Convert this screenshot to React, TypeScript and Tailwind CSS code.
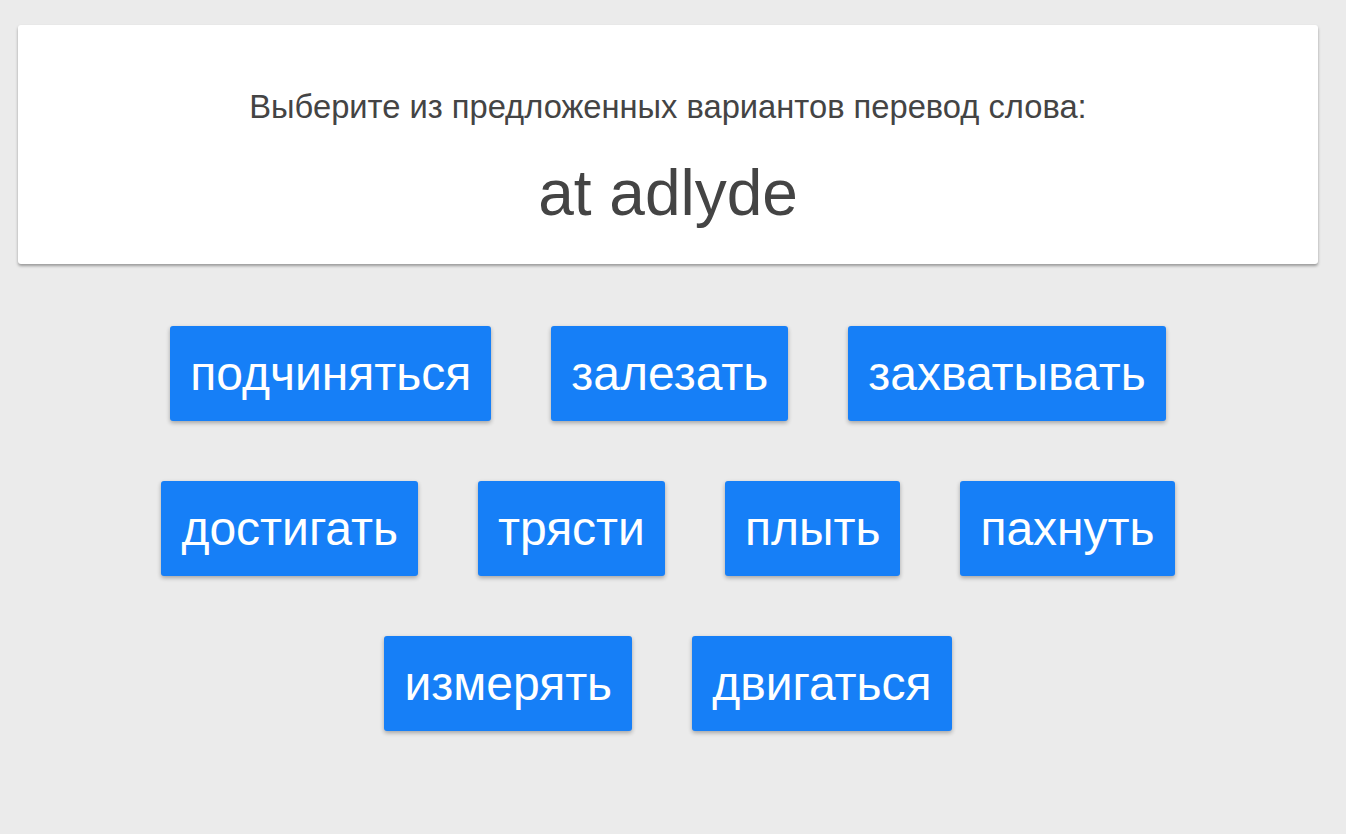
const words = [
  "подчиняться",
  "залезать",
  "захватывать",
  "достигать",
  "трясти",
  "плыть",
  "пахнуть",
  "измерять",
  "двигаться",
];

export default function App() {
  return (
    <div
      className="min-h-[834px] bg-[#ebebeb] pt-[25px]"
      style={{ fontFamily: '"Liberation Sans", Arial, sans-serif' }}
    >
      <div className="ml-[18px] w-[1300px]">
        <div className="flex h-[239px] flex-col items-center rounded-[3px] bg-white pt-[62px] shadow-[0_2px_3px_rgba(0,0,0,0.35)]">
          <p className="text-[32.7px] leading-[40px] text-[#444]">
            Выберите из предложенных вариантов перевод слова:
          </p>
          <h1 className="mt-[30px] text-[64px] leading-[72px] text-[#444]">at adlyde</h1>
        </div>

        <div className="mt-[32px] flex flex-wrap justify-center">
          {words.map((w) => (
            <button
              key={w}
              className="m-[30px] flex h-[95px] items-center rounded-[3px] bg-[#167ff7] px-[20px] text-[48px] leading-[56px] text-white shadow-[0_2px_4px_rgba(0,0,0,0.3)]"
            >
              {w}
            </button>
          ))}
        </div>
      </div>
    </div>
  );
}
